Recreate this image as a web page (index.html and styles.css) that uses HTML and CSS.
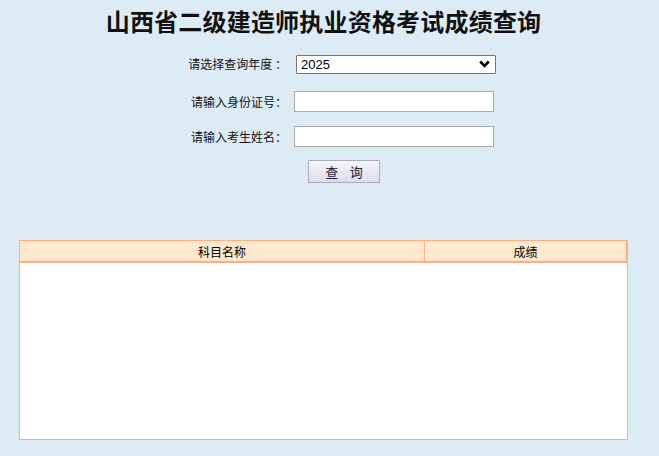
FILE: index.html
```html
<!DOCTYPE html>
<html lang="zh-CN">
<head>
<meta charset="utf-8">
<title>山西省二级建造师执业资格考试成绩查询</title>
<link rel="stylesheet" href="styles.css">
</head>
<body>
<div class="page">
  <h1 class="title">山西省二级建造师执业资格考试成绩查询</h1>
  <div class="form">
    <div class="row">
      <label class="label">请选择查询年度 ：</label>
      <div class="select"><span>2025</span><svg class="chev" width="11" height="8" viewBox="0 0 11 8"><path d="M1.2 1.5 L5.5 5.8 L9.8 1.5" fill="none" stroke="#000" stroke-width="2.6"/></svg></div>
    </div>
    <div class="row">
      <label class="label">请输入身份证号：</label>
      <input class="field" type="text">
    </div>
    <div class="row">
      <label class="label">请输入考生姓名：</label>
      <input class="field" type="text">
    </div>
    <div class="row btnrow">
      <button class="btn" type="button">查&nbsp;&nbsp;&nbsp;&nbsp;询</button>
    </div>
  </div>
  <div class="result">
    <div class="head">
      <div class="c1">科目名称</div>
      <div class="c2">成绩</div>
    </div>
    <div class="body"></div>
  </div>
</div>
</body>
</html>
```
FILE: styles.css
```css
html, body {
  margin: 0;
  padding: 0;
  background: #ddebf5;
}
body {
  font-family: "Noto Sans CJK SC", "Noto Sans", sans-serif;
  font-size: 12px;
  color: #000;
}
.page {
  width: 609px;
  margin-left: 19px;
  padding-top: 5px;
}
.title {
  margin: 0;
  text-align: center;
  font-size: 24px;
  line-height: 32px;
  font-weight: 700;
  letter-spacing: 0.2px;
  color: #111;
}
.form {
  margin-top: 17px;
  margin-left: 158px;
}
.row {
  display: flex;
  align-items: center;
  margin-bottom: 14px;
}
.row:first-child { margin-bottom: 17px; }
.label {
  width: 110px;
  text-align: right;
  padding-right: 7px;
  font-size: 12px;
  line-height: 20px;
  color: #111;
}
.select {
  width: 200px;
  height: 19px;
  margin-left: 2px;
  box-sizing: border-box;
  background: #fff;
  border: 1px solid #767676;
  border-radius: 1px;
  display: flex;
  align-items: center;
  justify-content: space-between;
  padding: 0 5px 0 4px;
  font-family: "Liberation Sans", Arial, sans-serif;
  font-size: 13px;
}
.field {
  width: 200px;
  height: 21px;
  box-sizing: border-box;
  margin: 0;
  border: 1px solid #a9a9a9;
  background: #fff;
  padding: 0 3px;
}
.btnrow {
  padding-left: 131px;
  margin-top: -1px;
}
.btn {
  width: 72px;
  height: 23px;
  margin: 0;
  padding: 0;
  border: 1px solid #a9afb9;
  background: linear-gradient(#f6f6fa, #e6e7ef 60%, #dcdde8);
  font-family: "Noto Sans CJK SC", sans-serif;
  font-size: 13px;
  color: #1a1a3a;
}
.result {
  margin-top: 57px;
  width: 609px;
  box-sizing: border-box;
  border: 1px solid #ffad85;
  background: #fff;
}
.head {
  display: flex;
  height: 20px;
  background: #ffe8cf;
  border-top: 1px solid #ffad85;
  border-bottom: 2px solid #ffad85;
  margin-top: -1px;
  margin-right: -1px;
  border-right: 2px solid #ffad85;
}
.head > div {
  display: flex;
  align-items: center;
  justify-content: center;
  font-size: 12px;
  line-height: 20px;
  padding-top: 1px;
}
.c1 {
  width: 404px;
  border-right: 1px solid #ffad85;
}
.c2 {
  flex: 1;
}
.body {
  height: 176px;
  background: #fff;
}
```
